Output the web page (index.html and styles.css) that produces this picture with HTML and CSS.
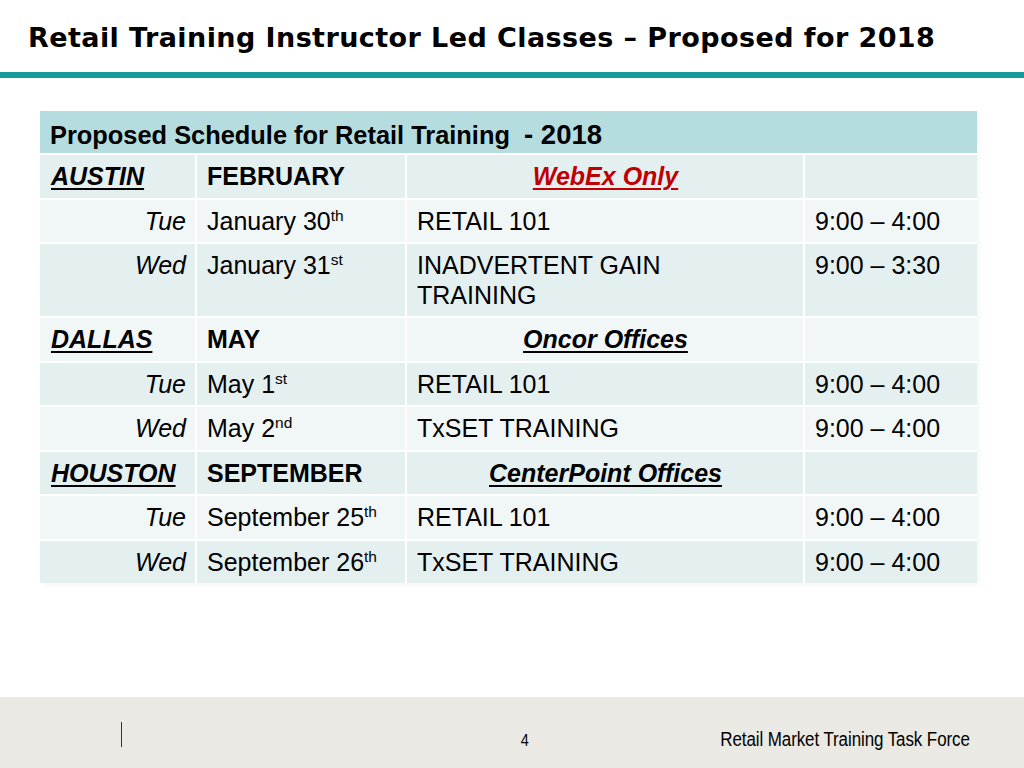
FILE: index.html
```html
<!DOCTYPE html>
<html lang="en">
<head>
<meta charset="utf-8">
<title>Retail Training Instructor Led Classes – Proposed for 2018</title>
<link rel="stylesheet" href="styles.css">
</head>
<body>
<header class="title-bar">
  <h1 class="title">Retail Training Instructor Led Classes – Proposed for 2018</h1>
</header>
<div class="rule"></div>
<main class="content">
  <div class="schedule">
    <div class="cell head">Proposed Schedule for Retail Training&nbsp; <span class="year">- 2018</span></div>

    <div class="cell band-a city">AUSTIN</div>
    <div class="cell band-a month">FEBRUARY</div>
    <div class="cell band-a venue red">WebEx Only</div>
    <div class="cell band-a"></div>

    <div class="cell band-b day">Tue</div>
    <div class="cell band-b">January 30<sup>th</sup></div>
    <div class="cell band-b">RETAIL 101</div>
    <div class="cell band-b">9:00 – 4:00</div>

    <div class="cell band-a day">Wed</div>
    <div class="cell band-a">January 31<sup>st</sup></div>
    <div class="cell band-a">INADVERTENT GAIN<br>TRAINING</div>
    <div class="cell band-a">9:00 – 3:30</div>

    <div class="cell band-b city">DALLAS</div>
    <div class="cell band-b month">MAY</div>
    <div class="cell band-b venue">Oncor Offices</div>
    <div class="cell band-b"></div>

    <div class="cell band-a day">Tue</div>
    <div class="cell band-a">May 1<sup>st</sup></div>
    <div class="cell band-a">RETAIL 101</div>
    <div class="cell band-a">9:00 – 4:00</div>

    <div class="cell band-b day">Wed</div>
    <div class="cell band-b">May 2<sup>nd</sup></div>
    <div class="cell band-b">TxSET TRAINING</div>
    <div class="cell band-b">9:00 – 4:00</div>

    <div class="cell band-a city">HOUSTON</div>
    <div class="cell band-a month">SEPTEMBER</div>
    <div class="cell band-a venue">CenterPoint Offices</div>
    <div class="cell band-a"></div>

    <div class="cell band-b day">Tue</div>
    <div class="cell band-b">September 25<sup>th</sup></div>
    <div class="cell band-b">RETAIL 101</div>
    <div class="cell band-b">9:00 – 4:00</div>

    <div class="cell band-a day">Wed</div>
    <div class="cell band-a">September 26<sup>th</sup></div>
    <div class="cell band-a">TxSET TRAINING</div>
    <div class="cell band-a">9:00 – 4:00</div>
  </div>
</main>
<footer class="footer">
  <span class="divider"></span>
  <span class="page-num">4</span>
  <span class="org">Retail Market Training Task Force</span>
</footer>
</body>
</html>
```
FILE: styles.css
```css
html, body {
  margin: 0;
  padding: 0;
}
body {
  width: 1024px;
  height: 768px;
  background: #ffffff;
  color: #000;
  font-family: "Liberation Sans", Arial, Helvetica, sans-serif;
  display: flex;
  flex-direction: column;
  overflow: hidden;
}
.title-bar {
  padding: 23px 0 0 28px;
  height: 72px;
  box-sizing: border-box;
}
.title {
  margin: 0;
  font-family: "DejaVu Sans", "Liberation Sans", Arial, sans-serif;
  font-weight: bold;
  font-size: 27px;
  line-height: 30px;
  letter-spacing: 0.42px;
  white-space: nowrap;
}
.rule {
  height: 6px;
  background: #16999a;
}
.content {
  flex: 1;
  padding: 33px 0 0 40px;
}
.schedule {
  display: grid;
  grid-template-columns: 155px 208px 396px 172px;
  gap: 2px;
  width: 937px;
  font-size: 25px;
  line-height: 29.5px;
  box-shadow: 2px 2px 4px rgba(0,0,0,0.04);
}
.cell {
  padding: 7px 9px 6px 10px;
  min-height: 29.5px;
}
.head {
  grid-column: 1 / -1;
  background: #b5dcdf;
  font-weight: bold;
  font-size: 25.4px;
  height: 42px;
  box-sizing: border-box;
  padding-top: 9px;
  padding-left: 10px;
}
.head .year {
  font-size: 27.5px;
}
.band-a { background: #e4eff0; }
.band-b { background: #f1f6f7; }
.city {
  font-weight: bold;
  font-style: italic;
  text-decoration: underline;
  text-underline-offset: 3px;
  text-decoration-thickness: 2px;
  padding-left: 11px;
}
.month { font-weight: bold; }
.venue {
  font-weight: bold;
  font-style: italic;
  text-decoration: underline;
  text-underline-offset: 3px;
  text-decoration-thickness: 2px;
  text-align: center;
}
.venue.red { color: #c00000; }
.day {
  font-style: italic;
  text-align: right;
}
sup {
  font-size: 0.62em;
  line-height: 0;
  vertical-align: 0.6em;
}
.footer {
  height: 71px;
  background: #eae9e3;
  display: flex;
  align-items: flex-start;
  padding: 0 54px 0 121px;
}
.divider {
  width: 1px;
  height: 25px;
  margin-top: 25px;
  background: #333;
}
.page-num {
  margin-left: 398px;
  margin-top: 34px;
  font-size: 17px;
  line-height: 20px;
  transform: scaleX(0.85);
}
.org {
  margin-left: auto;
  margin-top: 31px;
  font-size: 19.5px;
  line-height: 22px;
  letter-spacing: -0.1px;
  transform: scaleX(0.87);
  transform-origin: right center;
}
```
